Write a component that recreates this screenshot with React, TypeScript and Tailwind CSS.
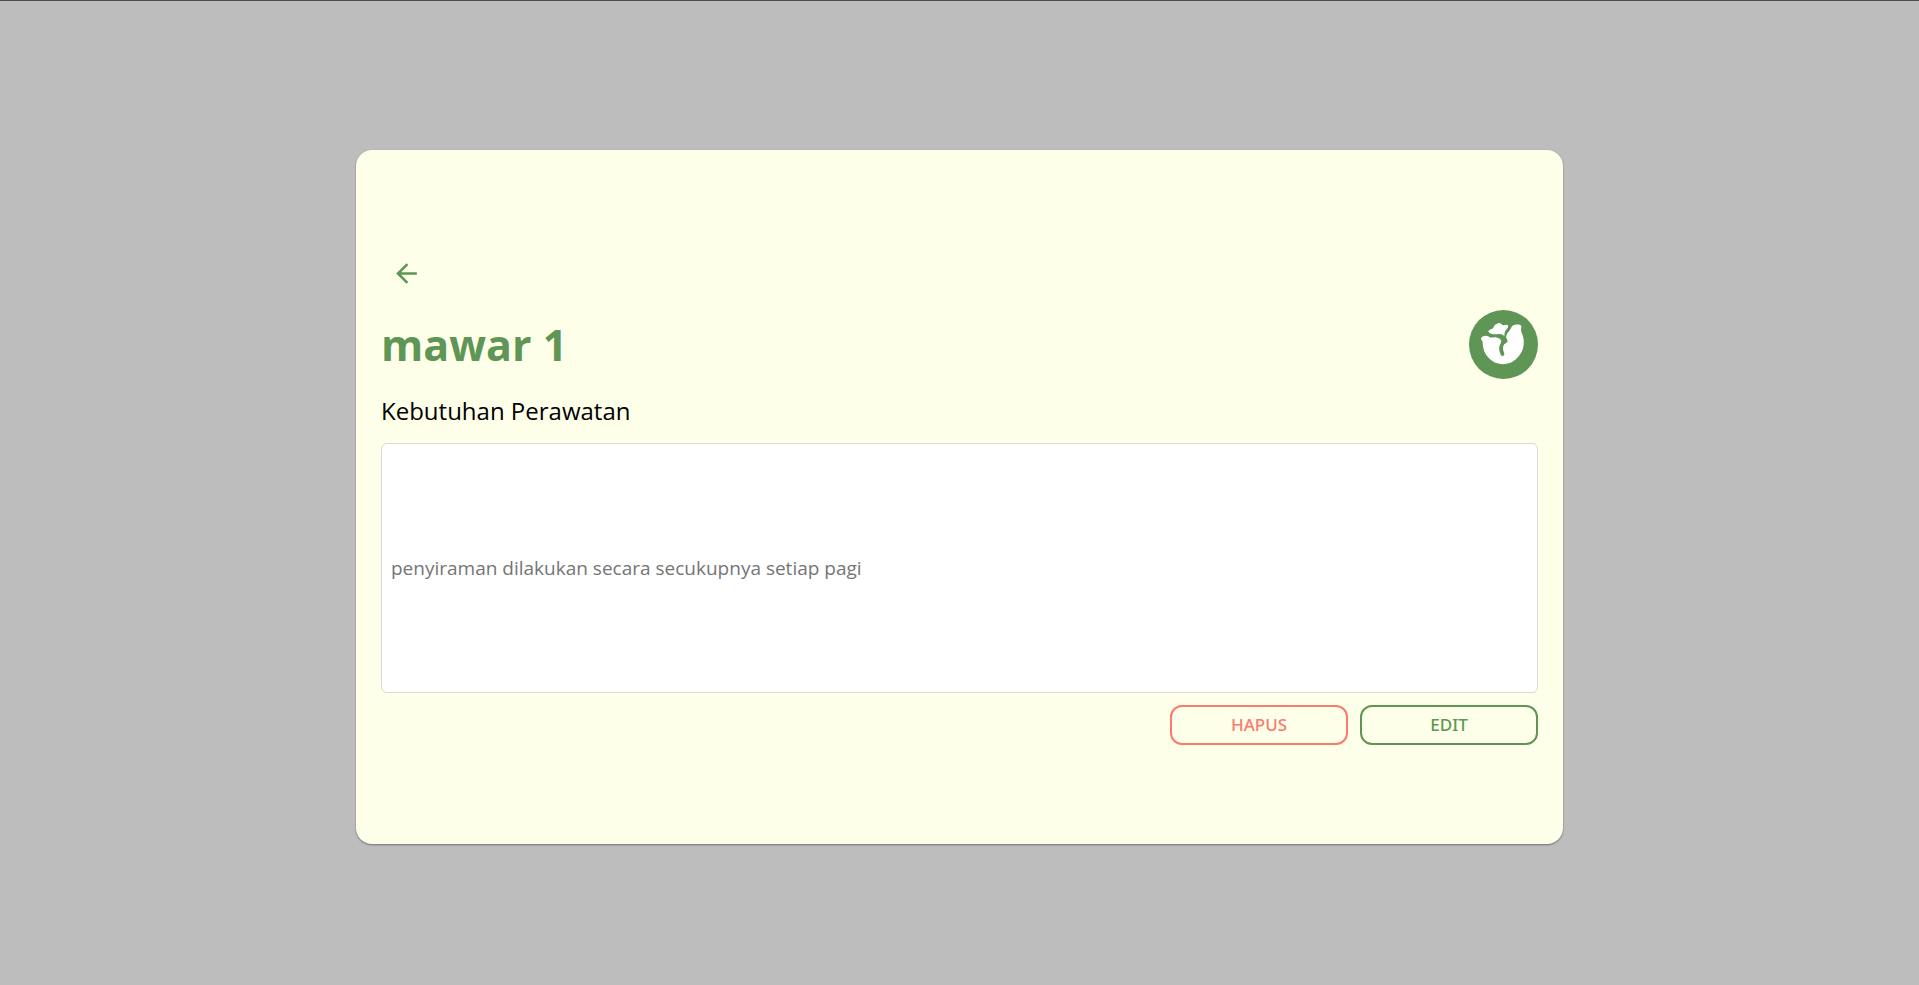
import { useState } from "react";

function ArrowBackIcon() {
  return (
    <svg viewBox="0 0 24 24" className="size-[31px]" fill="currentColor" aria-hidden="true">
      <path d="M20 11H7.830l5.590-5.590L12 4l-8 8 8 8 1.410-1.410L7.830 13H20v-2z" />
    </svg>
  );
}

function PlantBadge() {
  return (
    <svg viewBox="0 0 69 69" className="size-[69px] shrink-0" role="img" aria-label="Tanaman">
      <circle cx="34.500" cy="34.500" r="34.500" fill="#5f9656" />
      <g fill="#fff">
        <path d="M19.200 21.500C20 19.500 22.500 19.500 24 18.300C25 17 25 14.800 27 14.300C28.500 14 29 12.900 30.500 13.100C32 13.300 32.500 14.800 34 15.200C35.500 15.300 37.500 14.300 38.700 15.200C39.800 16.500 38.500 18 37.300 19.500C35.500 21.500 35.500 23.500 35.400 26.300C34 24.500 32 23.900 29.500 24.100C25.500 24.500 21 24.500 19.200 21.500Z" />
        <path d="M12 28.500C12.500 26.500 14.500 26 17 25.800C19 25.800 20 27.400 22 27.600C24 27.700 25.500 26.800 27.500 27.400C30 28 32 29 32.200 31C32.300 33 30.700 34.500 30.300 37C30 39.500 30.500 41.500 31.300 43.500C31.700 45.300 32.500 46.200 33.800 46C35.500 45.500 35.600 43.800 34.900 42.200C33.800 39.500 33.500 37.500 34.800 35C36 33 38.600 33 38.600 31C38.500 29.500 37 28.500 37.200 26.500C37.500 24 39 22.500 40.500 20.500C42.300 18.500 42 16.500 44 15.500C46 14.500 50.500 14 52 15.500C53.200 17 51.700 18.500 52 20.500C52.500 23 54 25.500 54.500 28.500C55.300 35 54.500 40.500 49.500 46.500C45.500 51.500 40.500 54 34 54.200C27.500 54 22.500 51.500 18.500 46.500C14.500 41.500 13.700 36.500 13.700 32C13.500 30.800 12 30 12 28.500Z" />
      </g>
    </svg>
  );
}

export default function App() {
  const [care, setCare] = useState("");
  return (
    <main className="flex min-h-screen flex-col items-center justify-center border-t border-[#4d4b4d] bg-[#bdbdbd] px-6 pt-2 font-['Open_Sans','Noto_Sans',sans-serif]">
      <section className="flex w-full max-w-[1207px] flex-col rounded-2xl bg-[#feffe9] px-[25px] pt-[98px] pb-[99px] shadow-[0_1px_2px_rgba(0,0,0,0.4)]">
        <button type="button" aria-label="Kembali" className="flex size-[50px] items-center justify-center text-[#5f9656]">
          <ArrowBackIcon />
        </button>
        <header className="mt-3 flex items-center justify-between">
          <h1 className="text-[43px] leading-[69px] font-bold text-[#5f9656]">mawar 1</h1>
          <PlantBadge />
        </header>
        <label htmlFor="care" className="mt-3 text-2xl leading-10 text-black">
          Kebutuhan Perawatan
        </label>
        <input
          id="care"
          type="text"
          value={care}
          onChange={(event) => setCare(event.target.value)}
          placeholder="penyiraman dilakukan secara secukupnya setiap pagi"
          className="mt-3 h-[250px] w-full rounded-md border border-[#d8d9da] bg-white px-[9px] text-[19px] text-[#333] outline-none placeholder:text-[#757575]"
        />
        <div className="mt-3 flex justify-end gap-3">
          <button type="button" className="h-10 w-[178px] rounded-xl border-2 border-[#fa7a6e] font-['Noto_Sans',sans-serif] text-[17px] font-medium text-[#fa7a6e]">
            HAPUS
          </button>
          <button type="button" className="h-10 w-[178px] rounded-xl border-2 border-[#5f9656] font-['Noto_Sans',sans-serif] text-[17px] font-medium text-[#5f9656]">
            EDIT
          </button>
        </div>
      </section>
    </main>
  );
}
